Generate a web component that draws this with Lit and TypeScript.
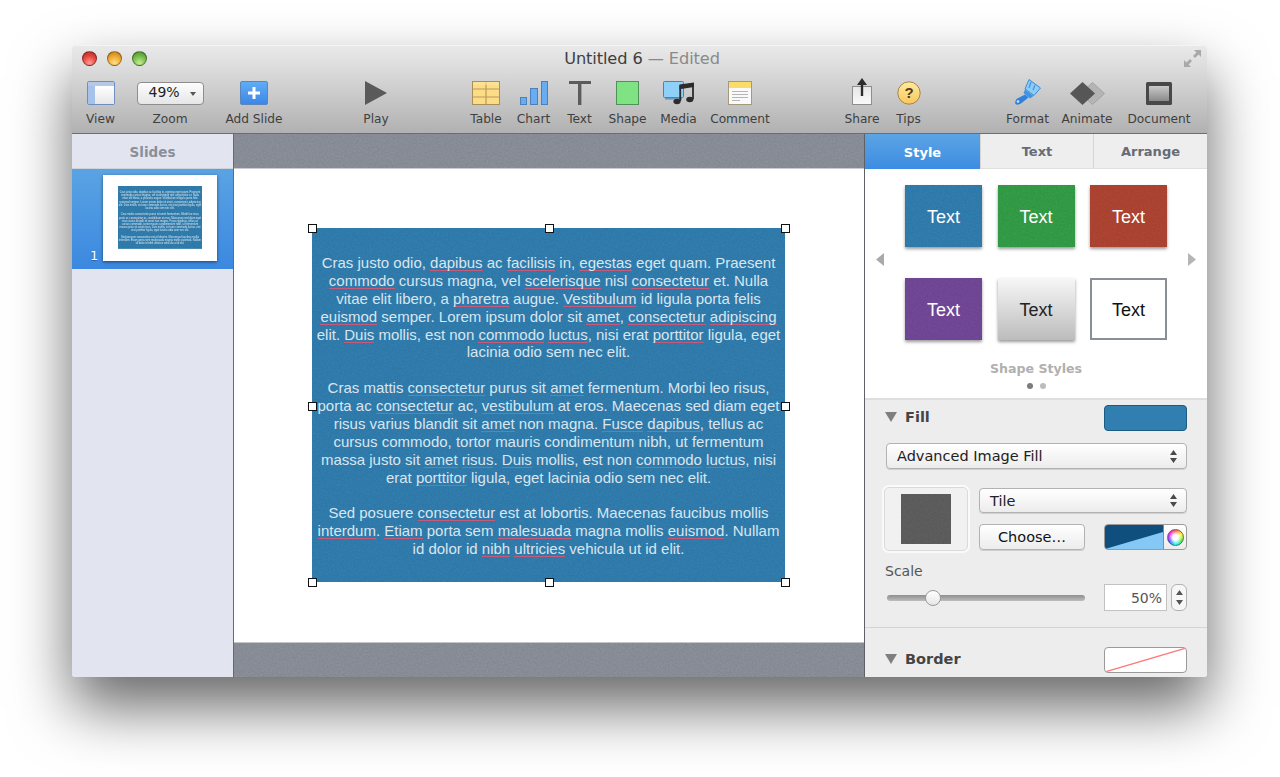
import { LitElement, html, css, svg } from "lit";
import { customElement } from "lit/decorators.js";

const P: { text: string; sp?: boolean }[][][] = [];
const parse = (s: string) => s.split("|").map((l) => l.split(/(\[[^\]]+\])/).filter(Boolean).map((t) => (t.startsWith("[") ? { text: t.slice(1, -1), sp: true } : { text: t })));
P.push(parse("Cras justo odio, [dapibus] ac [facilisis] in, [egestas] eget quam. Praesent|[commodo] cursus magna, vel [scelerisque] nisl [consectetur] et. Nulla|vitae elit libero, a [pharetra] augue. [Vestibulum] id ligula porta felis|[euismod] semper. Lorem ipsum dolor sit [amet], [consectetur] [adipiscing]|elit. [Duis] mollis, est non [commodo] [luctus], nisi erat [porttitor] ligula, eget|lacinia odio sem nec elit."));
P.push(parse("Cras mattis [consectetur] purus sit [amet] fermentum. Morbi leo risus,|porta ac [consectetur] ac, [vestibulum] at eros. Maecenas sed diam eget|risus varius blandit sit [amet] non magna. [Fusce] [dapibus], tellus ac|cursus commodo, tortor mauris condimentum nibh, ut fermentum|massa justo sit [amet] [risus]. [Duis] mollis, est non [commodo] [luctus], nisi|erat [porttitor] ligula, eget lacinia odio sem nec elit."));
P.push(parse("Sed posuere [consectetur] est at lobortis. Maecenas faucibus mollis|[interdum]. [Etiam] porta sem [malesuada] magna mollis [euismod]. Nullam|id dolor id [nibh] [ultricies] vehicula ut id elit."));

const ICONS: Record<string, any> = {
  view: html`<svg width="28" height="24" viewBox="0 0 28 24"><rect x=".5" y=".5" width="27" height="23" rx="1.5" fill="#fff" stroke="#6e8fbd"/><rect x="1" y="1" width="26" height="4" fill="#b5c9e6"/><rect x="1" y="5" width="7" height="18" fill="#a6c2ea"/><rect x="8" y="5" width="19" height="18" fill="url(#vg)"/><defs><linearGradient id="vg" x1="0" y1="0" x2="0" y2="1"><stop offset="0" stop-color="#fff"/><stop offset="1" stop-color="#e6e6e6"/></linearGradient></defs></svg>`,
  add: html`<svg width="28" height="24" viewBox="0 0 28 24"><rect x=".5" y=".5" width="27" height="23" rx="1.5" fill="url(#ag)" stroke="#5a86bb"/><rect x="12.5" y="6" width="3" height="12" fill="#fff"/><rect x="8" y="10.5" width="12" height="3" fill="#fff"/><defs><linearGradient id="ag" x1="0" y1="0" x2="0" y2="1"><stop offset="0" stop-color="#62adf6"/><stop offset="1" stop-color="#3b86e6"/></linearGradient></defs></svg>`,
  play: html`<svg width="24" height="24" viewBox="0 0 24 24"><path d="M1 0 L23 12 L1 24 Z" fill="#5a5a5a"/></svg>`,
  table: html`<svg width="28" height="24" viewBox="0 0 28 24"><rect x=".5" y=".5" width="27" height="23" fill="#fcdc85" stroke="#a98f5c"/><path d="M1 8H27M1 16H27M14 1V23" stroke="#b89a5e" stroke-width="1.2"/><rect x="1" y="1" width="26" height="3" fill="#fde69f" opacity=".6"/></svg>`,
  chart: html`<svg width="28" height="24" viewBox="0 0 28 24"><rect x=".5" y="16.5" width="6" height="7" fill="#68acf2" stroke="#4d7fb8"/><rect x="10.5" y="7.5" width="7" height="16" fill="#68acf2" stroke="#4d7fb8"/><rect x="21.5" y=".5" width="6" height="23" fill="#68acf2" stroke="#4d7fb8"/></svg>`,
  t: html`<svg width="22" height="24" viewBox="0 0 22 24"><rect x="0" y="0" width="22" height="3" fill="#5c5c5c"/><rect x="9" y="0" width="3.4" height="24" fill="#5c5c5c"/></svg>`,
  shape: html`<svg width="23" height="24" viewBox="0 0 23 24"><rect x=".5" y=".5" width="22" height="23" fill="#7fe283" stroke="#4f9258"/></svg>`,
  media: html`<svg width="32" height="24" viewBox="0 0 32 24"><rect x=".5" y=".5" width="20" height="16" rx="1" fill="#8fd0f8" stroke="#4f7fb4"/><rect x="2" y="17" width="17" height="1.6" fill="#6b97c6"/><path d="M17.2 20 V5 L30 3 V18" fill="none" stroke="#2c2c2c" stroke-width="1.8"/><path d="M16.5 3.5 L31 1.5 V6 L16.5 8.2Z" fill="#2c2c2c"/><ellipse cx="14" cy="20.5" rx="3.6" ry="2.8" fill="#2c2c2c"/><ellipse cx="26.8" cy="18.5" rx="3.6" ry="2.8" fill="#2c2c2c"/></svg>`,
  comment: html`<svg width="24" height="24" viewBox="0 0 24 24"><rect x=".5" y=".5" width="23" height="23" fill="#fafafa" stroke="#a39a7e"/><rect x="1" y="1" width="22" height="6" fill="#fbdc67"/><path d="M4 10.5H20M4 13.5H20M4 16.5H20M4 19.5H12" stroke="#b5b5b5"/></svg>`,
  share: html`<svg width="20" height="28" viewBox="0 0 20 28"><rect x=".5" y="9.5" width="19" height="18" fill="url(#sg)" stroke="#8e8e8e"/><path d="M10 1 L15 8 H11.2 V19 H8.8 V8 H5Z" fill="#2b2b2b"/><defs><linearGradient id="sg" x1="0" y1="0" x2="0" y2="1"><stop offset="0" stop-color="#e6e6e6"/><stop offset="1" stop-color="#fafafa"/></linearGradient></defs></svg>`,
  tips: html`<svg width="24" height="24" viewBox="0 0 24 24"><circle cx="12" cy="12" r="11.2" fill="url(#tg)" stroke="#a5834a"/><text x="12" y="17" text-anchor="middle" font-family="Liberation Sans, sans-serif" font-weight="700" font-size="15" fill="#4d3d1e">?</text><defs><linearGradient id="tg" x1="0" y1="0" x2="0" y2="1"><stop offset="0" stop-color="#fdeaa0"/><stop offset="1" stop-color="#f9c75c"/></linearGradient></defs></svg>`,
  format: html`<svg width="27" height="26" viewBox="0 0 27 26"><path d="M15 0.5 L26.5 9 L20 16.5 L11 10Z" fill="#8ccdf8" stroke="#4288cf"/><path d="M17 3 L15 9 M21 6 L19 11" stroke="#4b9be0" stroke-width="1.4"/><path d="M11 10.5 L19.5 17 L16 19.5 L9.5 14Z" fill="#3f93e6"/><path d="M11 15.5 L14.5 18.5 L7 24.5 Q3.5 26.5 1.5 25 Q.5 23 2.5 20Z" fill="#2f82dc"/><circle cx="4" cy="22.5" r="1.3" fill="#cfe6fb"/></svg>`,
  animate: html`<svg width="35" height="23" viewBox="0 0 35 23"><path d="M22.5 .5 L34.5 11.5 L22.5 22.5 L10.5 11.5Z" fill="#b4b4b4" stroke="#a3a3a3"/><path d="M12.5 0 L25 11.5 L12.5 23 L0 11.5Z" fill="#565656"/></svg>`,
  doc: html`<svg width="26" height="23" viewBox="0 0 26 23"><rect x="0" y="0" width="26" height="23" rx="1.5" fill="#484848"/><rect x="3" y="4" width="20" height="15" fill="url(#dg)"/><defs><linearGradient id="dg" x1="0" y1="0" x2="0" y2="1"><stop offset="0" stop-color="#c9c9c9"/><stop offset="1" stop-color="#8a8a8a"/></linearGradient></defs></svg>`,
};

const updown = html`<svg class="ud" width="7" height="13" viewBox="0 0 7 13"><path d="M3.5 0 L7 5 H0Z M3.5 13 L7 8 H0Z" fill="#4a4a4a"/></svg>`;
const tri = html`<svg class="tri" width="12" height="10" viewBox="0 0 12 10"><path d="M0 0H12L6 10Z" fill="#7f7f7f"/></svg>`;

const tools: [string, string][][] = [
  [["View", "view"], ["Zoom", "zoom"], ["Add Slide", "add"]],
  [["Play", "play"]],
  [["Table", "table"], ["Chart", "chart"], ["Text", "t"], ["Shape", "shape"], ["Media", "media"], ["Comment", "comment"]],
  [["Share", "share"], ["Tips", "tips"]],
  [["Format", "format"], ["Animate", "animate"], ["Document", "doc"]],
];

const tiles = [
  ["Text", "blue"], ["Text", "green"], ["Text", "red"],
  ["Text", "purple"], ["Text", "silver"], ["Text", "outline"],
];

const grain = svg`<svg class="grain" aria-hidden="true"><rect width="100%" height="100%" filter="url(#noise)"/></svg>`;

@customElement("app-root")
export class AppRoot extends LitElement {
  static styles = css`
    :host { display: block; background: #fff; height: 777px; overflow: hidden; font-family: "DejaVu Sans", sans-serif; padding: 45px 73px 0 72px; box-sizing: border-box; }
    .window { width: 1135px; height: 632px; border-radius: 5px 5px 3px 3px; box-shadow: 0 30px 60px rgba(0,0,0,.6); display: flex; flex-direction: column; overflow: hidden; position: relative; background: #eee; }
    .defs { position: absolute; width: 0; height: 0; }
    .toolbar { height: 89px; box-sizing: border-box; background: linear-gradient(#e9e9e9, #dcdcdc 25%, #b1b1b1); border-top: 1px solid #f4f4f4; border-bottom: 1px solid #6d6d6d; flex: none; }
    .titlebar { height: 25px; display: grid; grid-template-columns: 1fr auto 1fr; align-items: center; padding: 0 5px 0 10px; }
    .lights { display: flex; gap: 10px; }
    .light { width: 15px; height: 15px; border-radius: 50%; border: 1px solid rgba(0,0,0,.35); box-sizing: border-box; }
    .l-r { background: radial-gradient(circle at 50% 85%, #ff9d95, #e5453d 55%, #b02a26); }
    .l-y { background: radial-gradient(circle at 50% 85%, #ffe08a, #eca72e 55%, #bb7a17); }
    .l-g { background: radial-gradient(circle at 50% 85%, #c4f08f, #72b94b 55%, #478a2b); }
    .title { font-size: 16.2px; color: #3e3e3e; white-space: nowrap; letter-spacing: -.1px; }
    .title span { color: #8a8a8a; }
    .full { justify-self: end; display: flex; }
    .tools { display: flex; padding-left: 14px; height: 62px; }
    .group { display: flex; }
    .g1 { gap: 21.5px; }
    .g2 { margin-left: 81px; }
    .g3 { margin-left: 82px; gap: 15px; }
    .g4 { margin-left: 76px; gap: 17px; }
    .g5 { margin-left: 85px; gap: 14px; }
    .tool { display: flex; flex-direction: column; align-items: center; }
    .k-view { width: 29px; } .k-zoom { width: 67px; } .k-add { width: 58px; } .k-play { width: 24px; }
    .k-table { width: 32px; } .k-chart { width: 33px; } .k-t { width: 29px; } .k-shape { width: 37px; } .k-media { width: 35px; } .k-comment { width: 58px; }
    .k-share { width: 34px; } .k-tips { width: 25px; } .k-format { width: 43px; } .k-animate { width: 48px; } .k-doc { width: 68px; }
    .ic { height: 40px; box-sizing: border-box; display: flex; align-items: flex-end; justify-content: center; padding-bottom: 6px; }
    .lbl { font-size: 12.2px; line-height: 16px; color: #3f3f3f; white-space: nowrap; }
    .zoom { width: 67px; height: 23px; border: 1px solid #8e8e8e; border-radius: 4px; background: linear-gradient(#fdfdfd, #e6e6e6); box-sizing: border-box; display: flex; align-items: center; justify-content: space-between; font-size: 14px; line-height: 19px; padding: 0 7px 2px 11px; color: #222; flex: none; }
    .caret { width: 0; height: 0; border-left: 3px solid transparent; border-right: 3px solid transparent; border-top: 4px solid #555; margin-top: 2px; }
    .body { flex: 1; display: flex; min-height: 0; }
    .side { width: 161px; flex: none; background: #e2e5ef; border-right: 1px solid #666a72; display: flex; flex-direction: column; }
    .side-h { height: 33px; padding-top: 1px; display: flex; align-items: center; justify-content: center; font-size: 13.5px; font-weight: 700; color: #8a8f9a; border-bottom: 1px solid #cfd3dc; flex: none; }
    .row { height: 100px; background: linear-gradient(#5aa3e3, #3b88e0); display: flex; padding: 6px 0 0 18px; box-sizing: border-box; gap: 5px; flex: none; }
    .num { align-self: flex-end; font-size: 13px; color: #fff; margin-bottom: 6px; width: 8px; text-shadow: 0 1px 1px rgba(0,0,0,.3); }
    .thumb { width: 114px; height: 86px; background: #fff; box-shadow: 0 1px 3px rgba(0,0,0,.5); display: flex; justify-content: center; padding-top: 11px; box-sizing: border-box; }
    .mini { width: 84px; height: 64px; overflow: hidden; position: relative; }
    .mini .shape { transform: scale(.1776); transform-origin: 0 0; }
    .center { flex: 1; display: flex; flex-direction: column; min-width: 0; }
    .gray { height: 34px; flex: none; background: #8b909a; position: relative; overflow: hidden; }
    .gray.top { border-bottom: 1px solid #c9ccd2; }
    .gray.bot { border-top: 1px solid #c4c6ca; }
    .slide { flex: 1; background: #fff; display: flex; justify-content: flex-start; padding: 59px 0 0 78px; box-sizing: border-box; }
    .sel { position: relative; width: 473px; height: 354px; }
    .shape { position: relative; width: 473px; height: 354px; padding-top: 2px; box-sizing: border-box; background: #317eb0; color: #d9e6f0; font-family: "Liberation Sans", Arial, sans-serif; font-size: 15px; line-height: 17.875px; text-align: center; display: flex; flex-direction: column; justify-content: center; gap: 17.875px; overflow: hidden; }
    .shape p { margin: 0; position: relative; }
    .shape .ln { display: block; white-space: nowrap; }
    .sp { box-shadow: inset 0 -1px 0 #c75a78; }
    .grain { position: absolute; inset: 0; width: 100%; height: 100%; opacity: .07; pointer-events: none; }
    .h { position: absolute; width: 9px; height: 9px; margin: -4px 0 0 -4px; background: #fff; border: 1.5px solid #111; box-sizing: border-box; }
    .hl { left: 0; } .hc { left: 237px; } .hr { left: 473px; }
    .ht { top: 0; } .hm { top: 178px; } .hb { top: 354px; }
    .insp { width: 343px; flex: none; border-left: 1px solid #5e6167; box-sizing: border-box; background: #ededed; display: flex; flex-direction: column; font-size: 14px; color: #333; }
    .tabs { display: grid; grid-template-columns: 115px 113px 1fr; height: 35px; flex: none; }
    .tab { display: flex; align-items: center; justify-content: center; font-weight: 700; font-size: 13px; padding-top: 1px; box-sizing: border-box; color: #666b75; background: #eeeeee; border-left: 1px solid #d5d5d5; border-bottom: 1px solid #e0e0e0; }
    .tab.on { background: linear-gradient(#5ba4e4, #3d8ce2); color: #fff; border: 0; }
    .styles { height: 229px; flex: none; background: #fff; border-bottom: 2px solid #dedede; display: flex; flex-direction: column; align-items: center; }
    .styles-top { display: flex; align-items: center; justify-content: space-between; width: 100%; padding: 16px 11px 0 11px; box-sizing: border-box; }
    .arr { margin-top: -6px; display: flex; }
    .grid { display: grid; grid-template-columns: repeat(3, 77px); column-gap: 15.5px; row-gap: 31px; }
    .tile { height: 62px; display: flex; align-items: center; justify-content: center; color: #fff; font-family: "Liberation Sans", Arial, sans-serif; font-size: 18px; position: relative; overflow: hidden; box-sizing: border-box; }
    .tile span { position: relative; margin-top: 2px; }
    .tw { box-shadow: 0 2px 3px rgba(0,0,0,.4); display: block; height: 62px; }
    .tw.flat { box-shadow: none; }
    .blue { background: #317eb0; } .green { background: #349e48; } .red { background: #b04533; } .purple { background: #734899; }
    .silver { background: linear-gradient(#f7f7f7, #bcbcbc); color: #222; }
    .outline { background: #fff; color: #111; border: 2px solid #8a8f95; }
    .cap { font-weight: 700; font-size: 12.6px; color: #b0b0b0; margin-top: 21px; }
    .dots { display: flex; gap: 7px; margin-top: 7px; }
    .dot { width: 6px; height: 6px; border-radius: 50%; background: #bcbcbc; }
    .dot.on { background: #7c7c7c; }
    .sec { padding: 5px 20px 16px 20px; border-bottom: 1px solid #d4d4d4; flex: none; }
    .sec-h { display: flex; align-items: center; justify-content: space-between; height: 26px; }
    .sec-t { display: flex; align-items: center; gap: 8px; font-weight: 700; font-size: 14.5px; color: #444; margin-top: -3px; }
    .well { width: 83px; height: 26px; border-radius: 4px; box-sizing: border-box; position: relative; overflow: hidden; }
    .well.fill { background: #317eb0; border: 1px solid #1d5a84; }
    .well.none { background: #fff; border: 1px solid #9a9a9a; }
    .well.none svg { position: absolute; inset: 0; }
    .select { height: 26px; border: 1px solid #b2b2b2; border-radius: 4px; background: linear-gradient(#fff, #ececec); box-shadow: 0 1px 0 #d0d0d0; box-sizing: border-box; display: flex; align-items: center; justify-content: space-between; padding: 0 9px 0 10px; font-size: 14.5px; color: #222; }
    .s1 { margin: 12px 0 0 1px; }
    .img-row { display: flex; gap: 11px; margin: 18px 0 0 -1px; }
    .img { width: 84px; height: 64px; background: #f1f1f1; border: 1px solid #dadada; border-radius: 5px; box-shadow: 0 0 0 2px #fafafa; box-sizing: border-box; display: flex; align-items: center; justify-content: center; flex: none; }
    .img i { display: block; width: 50px; height: 50px; background: #5f5f5f; position: relative; overflow: hidden; }
    .img-r { flex: 1; display: flex; flex-direction: column; gap: 11px; padding-top: 1px; }
    .img-r .select { height: 25px; }
    .img-b { display: flex; justify-content: space-between; }
    .btn { width: 106px; height: 26px; border: 1px solid #b2b2b2; border-radius: 4px; background: linear-gradient(#fff, #ececec); box-shadow: 0 1px 0 #d0d0d0; box-sizing: border-box; display: flex; align-items: center; justify-content: center; font-size: 14.5px; color: #111; }
    .cw { width: 83px; height: 26px; border: 1px solid #9a9a9a; border-radius: 4px; box-sizing: border-box; overflow: hidden; display: flex; background: linear-gradient(#fff, #ececec); }
    .cw svg { flex: none; }
    .wheel { flex: 1; display: flex; align-items: center; justify-content: center; border-left: 1px solid #8a8a8a; }
    .wheel i { display: block; width: 17px; height: 17px; border-radius: 50%; background: radial-gradient(circle, #fff 25%, transparent 70%), conic-gradient(#f44, #ff0, #4d4, #0ff, #44f, #f0f, #f44); border: 1px solid #666; box-sizing: border-box; }
    .scale-l { font-size: 14px; line-height: 16px; color: #555; margin-top: 12px; }
    .scale-r { display: flex; align-items: center; margin-top: 5px; height: 27px; }
    .track { width: 198px; height: 6px; margin-left: 2px; border-radius: 3px; background: linear-gradient(#8e8e8e, #bdbdbd); position: relative; }
    .thumbk { position: absolute; left: 38px; top: -5px; width: 16px; height: 16px; border-radius: 50%; background: linear-gradient(#fff, #e6e6e6); border: 1px solid #9a9a9a; box-sizing: border-box; }
    .input { width: 63px; height: 27px; margin-left: 19px; background: #fff; border: 1px solid #c2c2c2; box-sizing: border-box; display: flex; align-items: center; justify-content: flex-end; padding-right: 4px; font-size: 14px; color: #555; }
    .step { width: 16px; height: 27px; margin-left: 4px; border: 1px solid #b2b2b2; border-radius: 6px; background: #f7f7f7; box-sizing: border-box; display: flex; align-items: center; justify-content: center; }
    .sec2 { padding: 19px 20px 0 20px; border: 0; }
    .sec2 .sec-t { margin-top: -2px; }
  `;

  private shape() {
    return html`<div class="shape">
      ${grain}
      ${P.map((p) => html`<p>${p.map((line) => html`<span class="ln">${line.map((t) => (t.sp ? html`<span class="sp">${t.text}</span>` : t.text))}</span>`)}</p>`)}
    </div>`;
  }

  private tool(name: string, key: string) {
    const ic = key === "zoom" ? html`<div class="zoom">49%<span class="caret"></span></div>` : ICONS[key];
    return html`<div class="tool k-${key}"><div class="ic">${ic}</div><div class="lbl">${name}</div></div>`;
  }

  render() {
    return html`<div class="window">
      <svg class="defs" aria-hidden="true"><defs><filter id="noise" x="0" y="0" width="100%" height="100%"><feTurbulence type="fractalNoise" baseFrequency="0.55" numOctaves="3" seed="4"/><feColorMatrix values="0 0 0 0 0  0 0 0 0 0  0 0 0 0 0  0.9 0.9 0.9 0 -0.95"/></filter></defs></svg>
      <div class="toolbar">
        <div class="titlebar">
          <div class="lights"><div class="light l-r"></div><div class="light l-y"></div><div class="light l-g"></div></div>
          <div class="title">Untitled 6 <span>— Edited</span></div>
          <div class="full"><svg width="19" height="19" viewBox="0 0 19 19"><path d="M11 1H18V8L15.6 5.6L12 9L10 7L13.4 3.4Z M8 18H1V11L3.4 13.4L7 10L9 12L5.6 15.6Z" fill="#a9a9a9"/></svg></div>
        </div>
        <div class="tools">
          ${tools.map((g, i) => html`<div class="group g${i + 1}">${g.map(([n, k]) => this.tool(n, k))}</div>`)}
        </div>
      </div>
      <div class="body">
        <div class="side">
          <div class="side-h">Slides</div>
          <div class="row"><div class="num">1</div><div class="thumb"><div class="mini">${this.shape()}</div></div></div>
        </div>
        <div class="center">
          <div class="gray top">${grain}</div>
          <div class="slide">
            <div class="sel">
              ${this.shape()}
              ${["hl ht", "hc ht", "hr ht", "hl hm", "hr hm", "hl hb", "hc hb", "hr hb"].map((c) => html`<div class="h ${c}"></div>`)}
            </div>
          </div>
          <div class="gray bot">${grain}</div>
        </div>
        <div class="insp">
          <div class="tabs"><div class="tab on">Style</div><div class="tab">Text</div><div class="tab">Arrange</div></div>
          <div class="styles">
            <div class="styles-top">
              <div class="arr"><svg width="8" height="13" viewBox="0 0 8 13"><path d="M8 0V13L0 6.5Z" fill="#a9a9a9"/></svg></div>
              <div class="grid">
                ${tiles.map(([t, c]) => html`<div class="tw ${c === "outline" ? "flat" : ""}"><div class="tile ${c}">${c !== "silver" && c !== "outline" ? grain : ""}<span>${t}</span></div></div>`)}
              </div>
              <div class="arr"><svg width="8" height="13" viewBox="0 0 8 13"><path d="M0 0V13L8 6.5Z" fill="#b5b5b5"/></svg></div>
            </div>
            <div class="cap">Shape Styles</div>
            <div class="dots"><div class="dot on"></div><div class="dot"></div></div>
          </div>
          <div class="sec">
            <div class="sec-h"><div class="sec-t">${tri}Fill</div><div class="well fill"></div></div>
            <div class="select s1">Advanced Image Fill${updown}</div>
            <div class="img-row">
              <div class="img"><i>${grain}</i></div>
              <div class="img-r">
                <div class="select">Tile${updown}</div>
                <div class="img-b">
                  <div class="btn">Choose…</div>
                  <div class="cw">
                    <svg width="58" height="24" viewBox="0 0 58 24"><rect width="58" height="24" fill="#0f4f7e"/><path d="M0 24L58 7V24Z" fill="#86c8f5"/></svg>
                    <div class="wheel"><i></i></div>
                  </div>
                </div>
              </div>
            </div>
            <div class="scale-l">Scale</div>
            <div class="scale-r">
              <div class="track"><div class="thumbk"></div></div>
              <div class="input">50%</div>
              <div class="step"><svg width="7" height="17" viewBox="0 0 7 17"><path d="M3.5 1L7 6H0Z M3.5 16L7 11H0Z" fill="#555"/></svg></div>
            </div>
          </div>
          <div class="sec sec2">
            <div class="sec-h"><div class="sec-t">${tri}Border</div>
              <div class="well none"><svg width="81" height="24" viewBox="0 0 81 24"><path d="M0 24L81 0" stroke="#f77" stroke-width="1.2"/></svg></div>
            </div>
          </div>
        </div>
      </div>
    </div>`;
  }
}
